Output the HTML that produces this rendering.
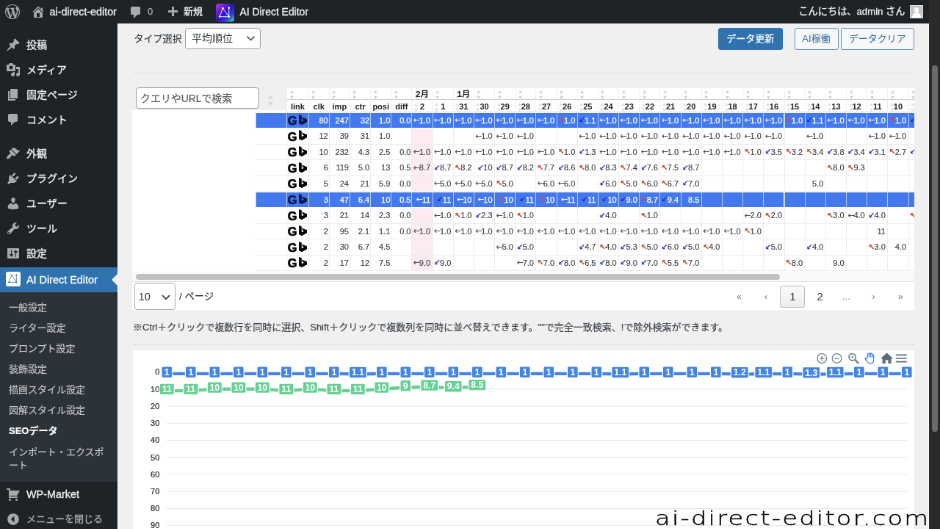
<!DOCTYPE html>
<html lang="ja"><head><meta charset="utf-8"><title>SEOデータ ‹ ai-direct-editor — WordPress</title>
<style>
*{box-sizing:border-box;margin:0;padding:0}
html,body{width:940px;height:529px;overflow:hidden;background:#f0f0f1}
body{font-family:"Liberation Sans","Noto Sans CJK JP",sans-serif;font-size:13px;color:#3c434a}
#root{will-change:transform;position:absolute;left:0;top:0;width:1280px;height:721px;transform:scale(0.734375);transform-origin:0 0;overflow:hidden;background:#f0f0f1}
.abs{position:absolute}
#adminbar{-webkit-text-stroke:0.300px currentColor;position:absolute;left:0;top:0;width:1265px;height:32px;background:#1d2327;color:#f0f0f1;font-size:13px;line-height:32px;white-space:nowrap}
#adminbar .t{position:absolute;top:0;height:32px;line-height:32px}
#adminbar svg{position:absolute;fill:#a7aaad}
#menu{position:absolute;left:0;top:32px;width:160px;height:689px;background:#1d2327}
.mi{-webkit-text-stroke:0.300px currentColor;position:absolute;left:0;width:160px;height:34px;color:#f0f0f1;font-size:14px;line-height:34px;white-space:nowrap}
.mi span{position:absolute;left:36px;top:0}
.mi svg{position:absolute;left:8px;top:7px;width:20px;height:20px;fill:#a7aaad}
#sub{position:absolute;left:0;top:366px;width:160px;height:258px;background:#2c3338}
.si{-webkit-text-stroke:0.200px currentColor;position:absolute;left:12px;width:136px;font-size:13px;line-height:18.2px;color:#c3c4c7}
#sbar{position:absolute;left:1265px;top:0;width:15px;height:721px;background:#2b2b2b}
#sbar i{position:absolute;left:4px;width:8px;top:89px;height:499px;border-radius:4px;background:#6b6b6b}
.btn{position:absolute;top:38px;height:30px;border:1px solid #5f8fc0;border-radius:3px;font-size:13px;line-height:28px;text-align:center;color:#2f6aa5;background:#f6f7f7;white-space:nowrap}
.btn.p{background:#3072b0;border-color:#3072b0;color:#fff;-webkit-text-stroke:0.250px #fff}
.sel{position:absolute;border:1px solid #9a9da1;border-radius:4px;background:#fff;color:#2c3338;font-size:14px;white-space:nowrap}
.hr{position:absolute;left:181px;width:1064px;height:1px;background:#dcdcde}

.th1,.th2{position:absolute;font-size:11px;font-weight:bold;color:#222;text-align:center;white-space:nowrap;border-left:1px solid #efefef}
.th1{line-height:16.500px;border-bottom:1.300px solid #cdcdcd;font-size:11.500px}
.th1 b{font-weight:bold}
.th2{line-height:18px;border-bottom:1px solid #d8d8d8}
.tr{position:absolute;left:0;width:1245px;font-size:11px;color:#3d3d3d;-webkit-text-stroke:0.150px #3d3d3d}
.td{position:absolute;top:0;height:100%;line-height:21.600px;text-align:right;padding-right:2.500px;white-space:nowrap;border-left:1px solid #ededed;border-bottom:1px solid #ececec;overflow:hidden}
.td.first{border-left:none}
.td.pk{background:#fcecf1}
.tr.on{color:#fff;-webkit-text-stroke:0.250px #fff}
.tr.on .td i{-webkit-text-stroke:0}
.tr.on .td{background:#4479ee;border-left:1.500px solid #b4ccf9;border-bottom:1.300px solid #fff}
.td i{font-style:normal;font-family:"DejaVu Sans",sans-serif;font-size:11px;display:inline-block;vertical-align:top;position:relative;top:-0.500px;margin-right:-1px}
.td i.aU,.td i.aD{font-weight:bold;font-size:10.500px;margin-right:-0.800px}
.td.m{padding-right:1px}
.aL{color:#555}.aU{color:#f0452a}.aD{color:#2238e0}
.tr.on .aL{color:#fff}.tr.on .aD{color:#1228c8}.tr.on .aU{color:#e8452f}
.td.lk{text-align:left;padding:0;color:#000}
.td.lk .g{position:absolute;left:0.500px;top:0.500px;font-size:16.300px;-webkit-text-stroke:0.700px currentColor;font-weight:bold;line-height:21.500px;color:#000}
.td.lk svg{position:absolute;left:15.900px;top:2.300px;fill:#000}
.tr.on .td.lk .g{color:#0b1748}.tr.on .td.lk svg{fill:#0b1748}
.pg{position:absolute;text-align:center;font-size:15px;line-height:20px}
</style></head>
<body>
<div id="root">
<div id="adminbar">
<svg class="abs" viewBox="0 0 20 20" width="20" height="20" style="left:7px;top:6px;"><path d="M20 10c0-5.510-4.490-10-10-10C4.480 0 0 4.490 0 10c0 5.520 4.480 10 10 10 5.510 0 10-4.480 10-10zM7.780 15.370L4.370 6.220c.55-.02 1.170-.08 1.170-.08.5-.06.44-1.130-.06-1.110 0 0-1.450.110-2.370.110-.18 0-.37 0-.58-.01C4.120 2.690 6.870 1.110 10 1.110c2.330 0 4.450.87 6.050 2.340-.68-.11-1.650.39-1.650 1.580 0 .74.45 1.360.9 2.100.35.61.55 1.360.55 2.460 0 1.490-1.400 5-1.400 5l-3.030-8.370c.54-.02.82-.17.82-.17.5-.05.44-1.250-.06-1.220 0 0-1.440.12-2.380.12-.87 0-2.330-.12-2.330-.12-.5-.03-.56 1.200-.06 1.220l.92.08 1.260 3.410zM17.410 10c.24-.64.74-1.870.43-4.250.7 1.290 1.050 2.710 1.050 4.250 0 3.290-1.730 6.240-4.400 7.780.97-2.590 1.940-5.200 2.920-7.780zM6.100 18.090C3.120 16.650 1.110 13.530 1.110 10c0-1.300.23-2.480.72-3.590C3.250 10.300 4.670 14.200 6.100 18.090zm4.030-6.630l2.580 6.980c-.86.29-1.760.45-2.710.45-.79 0-1.570-.11-2.290-.33.81-2.380 1.620-4.740 2.420-7.100z"/></svg>
<svg class="abs" viewBox="0 0 20 20" width="20" height="20" style="left:42px;top:6px;"><path d="M16 8.500l1.530 1.530-1.060 1.060L10 4.620l-6.470 6.470-1.060-1.060L10 2.500l4 4v-2h2v4zm-6-2.460l6 5.990V18H4v-5.970zM12 17v-5H8v5h4z"/></svg>
<span class="t" id="ab-site" style="left:67.5px;font-size:14.300px">ai-direct-editor</span>
<svg class="abs" viewBox="0 0 20 20" width="20" height="20" style="left:175px;top:7px;"><path d="M5 2h9c1.1 0 2 .9 2 2v7c0 1.1-.9 2-2 2h-2l-5 5v-5H5c-1.1 0-2-.9-2-2V4c0-1.1.9-2 2-2z"/></svg>
<span class="t" id="ab-c" style="left:201px;color:#a7aaad">0</span>
<svg class="abs" viewBox="0 0 20 20" width="20" height="20" style="left:225px;top:7px;"><path d="M17 7v3h-5v5H9v-5H4V7h5V2h3v5h5z"/></svg>
<span class="t" id="ab-new" style="left:250px">新規</span>
<svg class="abs" id="ab-logo" viewBox="0 0 25 25" width="24.800" height="24.800" style="left:294px;top:5px"><defs><linearGradient id="lg1" x1="0" y1="0" x2="1" y2="1"><stop offset="0" stop-color="#c236e6"/><stop offset="0.28" stop-color="#6a1fd8"/><stop offset="0.5" stop-color="#2a14c4"/><stop offset="0.75" stop-color="#2f44de"/><stop offset="0.93" stop-color="#3fc9a8"/><stop offset="1" stop-color="#58e0a0"/></linearGradient></defs><rect x="0" y="0" width="25" height="25" rx="4" fill="url(#lg1)"/><g stroke="#fff" stroke-width="0.950" fill="none" stroke-linejoin="round"><path d="M9.500 6.400L5.100 17.900H17.900Z"/><path d="M17.900 5.700V17.900"/></g><g fill="#fff"><circle cx="9.500" cy="6.400" r="1.300"/><circle cx="5.100" cy="17.900" r="1.300"/><circle cx="17.900" cy="17.900" r="1.300"/><circle cx="17.900" cy="5.700" r="1.300"/></g></svg>
<span class="t" id="ab-plug" style="left:326.500px;font-size:13.900px">AI Direct Editor</span>
<span class="t" id="ab-hello" style="right:32.500px;font-size:13.200px">こんにちは、admin さん</span>
<div class="abs" id="ab-av" style="left:1239.300px;top:7px;width:17.500px;height:17.500px;background:#c3c3c3;border:1px solid #dedede;overflow:hidden"><div class="abs" style="left:4.500px;top:2px;width:6.500px;height:7px;border-radius:50%;background:#fff"></div><div class="abs" style="left:1.500px;top:9px;width:12.500px;height:12px;border-radius:6px 6px 0 0;background:#fff"></div></div>
</div>
<div id="menu">
<div class="mi" style="top:12px"><svg viewBox="0 0 20 20"><path d="M10.44 3.02l1.82-1.82 6.36 6.35-1.83 1.82c-1.05-.68-2.48-.57-3.41.36l-.75.75c-.92.93-1.04 2.35-.35 3.41l-1.83 1.82-2.41-2.41-2.8 2.79c-.42.42-3.38 2.71-3.8 2.29s1.86-3.39 2.28-3.81l2.79-2.79L4.1 9.36l1.83-1.82c1.05.69 2.48.57 3.4-.36l.75-.75c.93-.92 1.05-2.35.36-3.41z"/></svg><span>投稿</span></div>
<div class="mi" style="top:46px"><svg viewBox="0 0 20 20"><path d="M13 11V4c0-.55-.45-1-1-1h-1.67L9 1H5L3.67 3H2c-.55 0-1 .45-1 1v7c0 .55.45 1 1 1h10c.55 0 1-.45 1-1zM7 4.5c1.38 0 2.5 1.12 2.5 2.5S8.38 9.5 7 9.5 4.5 8.38 4.5 7 5.62 4.5 7 4.5zM14 6h5v10.5c0 1.38-1.12 2.5-2.5 2.5S14 17.88 14 16.5s1.120-2.5 2.5-2.5c.17 0 .34.02.5.05V9h-3V6zm-4 8.05V13h2v3.5c0 1.38-1.12 2.5-2.5 2.5S7 17.88 7 16.5 8.12 14 9.5 14c.17 0 .34.02.5.05z"/></svg><span>メディア</span></div>
<div class="mi" style="top:80px"><svg viewBox="0 0 20 20"><path d="M6 15V2h10v13H6zm-1 1h8v2H3V5h2v11z"/></svg><span>固定ページ</span></div>
<div class="mi" style="top:114px"><svg viewBox="0 0 20 20"><path d="M5 2h9c1.1 0 2 .9 2 2v7c0 1.1-.9 2-2 2h-2l-5 5v-5H5c-1.1 0-2-.9-2-2V4c0-1.1.9-2 2-2z"/></svg><span>コメント</span></div>
<div class="mi" style="top:160px"><svg viewBox="0 0 20 20"><path d="M14.48 11.06L7.41 3.99l1.5-1.5c.5-.56 2.3-.47 3.51.32 1.21.8 1.43 1.28 2.91 2.1 1.18.64 2.45 1.26 4.45.85zm-.71.71L6.7 4.7 4.93 6.47c-.39.39-.39 1.02 0 1.41l1.06 1.06c.39.39.39 1.03 0 1.42-.6.6-1.43 1.11-2.21 1.69-.35.26-.7.53-1.01.84C1.43 14.23.4 16.08 1.4 17.07c.99 1 2.84-.03 4.18-1.36.31-.31.58-.66.85-1.02.57-.78 1.08-1.61 1.69-2.21.39-.39 1.02-.39 1.41 0l1.06 1.06c.39.39 1.02.39 1.41 0z"/></svg><span>外観</span></div>
<div class="mi" style="top:194px"><svg viewBox="0 0 20 20"><path d="M13.11 4.36L9.87 7.6 8 5.73l3.24-3.24c.35-.34 1.05-.2 1.56.32.52.51.66 1.21.31 1.55zm-8 1.77l.91-1.12 9.01 9.01-1.19.84c-.71.71-2.63 1.16-3.82 1.16H6.14L4.9 17.26c-.59.59-1.54.59-2.12 0-.59-.58-.59-1.53 0-2.12l1.24-1.24v-3.88c0-1.13.4-3.19 1.09-3.89zm7.26 3.97l3.24-3.24c.34-.35 1.04-.21 1.55.31.52.51.66 1.21.31 1.55l-3.24 3.25z"/></svg><span>プラグイン</span></div>
<div class="mi" style="top:228px"><svg viewBox="0 0 20 20"><path d="M10 9.25c-2.27 0-2.73-3.44-2.73-3.44C7 4.02 7.82 2 9.97 2c2.16 0 2.98 2.02 2.71 3.81 0 0-.41 3.44-2.68 3.44zm0 2.57L12.72 10c2.39 0 4.52 2.33 4.52 4.53v2.49s-3.65 1.13-7.24 1.13c-3.65 0-7.24-1.13-7.24-1.13v-2.49c0-2.25 1.94-4.48 4.47-4.48z"/></svg><span>ユーザー</span></div>
<div class="mi" style="top:262px"><svg viewBox="0 0 20 20"><path d="M16.68 9.77c-1.34 1.34-3.3 1.67-4.95.99l-5.41 6.52c-.99.99-2.59.99-3.58 0s-.99-2.59 0-3.57l6.52-5.42c-.68-1.65-.35-3.61.99-4.95 1.28-1.28 3.12-1.62 4.72-1.06l-2.89 2.89 2.82 2.82 2.86-2.89c.53 1.6.18 3.42-1.08 4.67zm-13.3 6.9c.46.46 1.2.46 1.66 0s.46-1.2 0-1.66c-.46-.46-1.2-.46-1.66 0s-.46 1.2 0 1.660z"/></svg><span>ツール</span></div>
<div class="mi" style="top:296px"><svg viewBox="0 0 20 20"><path d="M18 16V4c0-.55-.45-1-1-1H3c-.55 0-1 .45-1 1v12c0 .55.45 1 1 1h14c.55 0 1-.45 1-1zM8 11h1c.55 0 1 .45 1 1s-.45 1-1 1H8v1.5c0 .28-.22.5-.5.5s-.5-.22-.5-.5V13H6c-.55 0-1-.45-1-1s.45-1 1-1h1V5.500c0-.28.22-.5.5-.5s.5.22.5.5V11zm5-2h-1c-.55 0-1-.45-1-1s.45-1 1-1h1V5.500c0-.28.22-.5.5-.5s.5.22.5.5V7h1c.55 0 1 .45 1 1s-.45 1-1 1h-1v5.500c0 .28-.22.5-.5.5s-.5-.22-.5-.5V9z"/></svg><span>設定</span></div>
<div class="mi" id="mi-act" style="top:332px;background:#3072b0;color:#fff;font-size:14.400px"><div class="abs" style="left:8px;top:6px;width:20px;height:20px;border-radius:3px;background:#fff"></div><svg viewBox="0 0 25 25" style="top:6px;fill:none;stroke:#5580ae;stroke-width:1.100"><path d="M9.500 6.400L5.100 17.900H17.900Z"/><path d="M17.900 5.700V17.900"/><g style="fill:#2a5f98;stroke:none"><circle cx="9.500" cy="6.400" r="1.300"/><circle cx="5.100" cy="17.900" r="1.300"/><circle cx="17.900" cy="17.900" r="1.300"/><circle cx="17.900" cy="5.700" r="1.300"/></g></svg><span>AI Direct Editor</span><div class="abs" style="right:0;top:9px;width:0;height:0;border:8px solid transparent;border-right-color:#f0f0f1"></div></div>
<div id="sub">
<div class="si" style="top:11.9px;">一般設定</div>
<div class="si" style="top:39.7px;">ライター設定</div>
<div class="si" style="top:68.1px;">プロンプト設定</div>
<div class="si" style="top:96.3px;">装飾設定</div>
<div class="si" style="top:124.3px;">描画スタイル設定</div>
<div class="si" style="top:151.9px;">図解スタイル設定</div>
<div class="si" style="top:180.1px;color:#fff;font-weight:bold;">SEOデータ</div>
<div class="si" style="top:208.9px">インポート・エクスポート</div>
</div>
<div class="mi" style="top:623.5px;font-size:14.400px"><svg viewBox="0 0 20 20"><path d="M6 13h9c.55 0 1 .45 1 1s-.45 1-1 1H5c-.55 0-1-.45-1-1V4H2c-.55 0-1-.45-1-1s.45-1 1-1h3c.55 0 1 .45 1 1v2h13l-4 7H6v1zm-.5 3c.83 0 1.5.67 1.5 1.500S6.330 19 5.500 19 4 18.330 4 17.500 4.670 16 5.500 16zm9 0c.83 0 1.500.67 1.500 1.500s-.67 1.500-1.500 1.500-1.500-.67-1.500-1.500.67-1.500 1.500-1.500z"/></svg><span>WP-Market</span></div>
<div class="mi" style="top:658.4px;color:#a7aaad;font-size:13px"><svg viewBox="0 0 20 20"><path d="M10 2.160c4.330 0 7.840 3.510 7.840 7.840s-3.510 7.840-7.840 7.840S2.160 14.330 2.160 10 5.670 2.160 10 2.160zM11.470 14.500V5.500L6.970 10z"/></svg><span>メニューを閉じる</span></div>
</div>
<div id="sbar"><i></i></div>
<div class="abs" style="left:160px;top:32px;width:1.300px;height:689px;background:rgba(255,255,255,.85)"></div><div class="abs" style="left:160px;top:32px;width:1105px;height:1.300px;background:rgba(255,255,255,.85)"></div><div class="abs" style="left:1263.700px;top:32px;width:1.300px;height:689px;background:rgba(255,255,255,.85)"></div>
<div class="abs" id="lbl-type" style="-webkit-text-stroke:0.200px #3c434a;left:182.500px;top:43px;line-height:20px;font-size:13px;color:#3c434a">タイプ選択</div>
<div class="sel" id="sel-type" style="left:252px;top:38.100px;width:103px;height:29.300px;line-height:27.500px;padding-left:8px">平均順位<svg class="abs" viewBox="0 0 20 20" width="19" height="19" style="right:3.500px;top:4.200px"><path d="M4.700 7l5.300 5.300L15.300 7" fill="none" stroke="#50575e" stroke-width="1.700"/></svg></div>
<div class="btn p" id="b1" style="left:977.500px;width:88.500px">データ更新</div>
<div class="btn" id="b2" style="left:1081.500px;width:60px">AI稼働</div>
<div class="btn" id="b3" style="left:1145px;width:99.500px">データクリア</div>
<div class="hr" style="top:99px"></div>
<div class="abs" id="tbl" style="left:0;top:0;width:1245.0px;height:430px;overflow:hidden">
<div class="abs" style="left:390.2px;top:119.5px;width:854.8px;height:34.0px;background:#fff"></div>
<div class="abs" style="left:180.4px;top:149.5px;width:1064.6px;height:272.5px;background:#fff"></div>
<div class="abs thead" style="left:0;top:0">
<svg class="abs" viewBox="0 0 8 16" width="7.0" height="14.0" style="left:393.70px;top:121.50px"><path d="M4 1L7 6H1z" fill="#d4d4d4"/><path d="M4 15L7 10H1z" fill="#d4d4d4"/></svg>
<div class="th1" style="left:390.20px;top:119.5px;width:29.40px;height:16.70px"></div>
<div class="th2" style="left:390.20px;top:136.2px;width:29.40px;height:17.30px">link</div>
<svg class="abs" viewBox="0 0 8 16" width="7.0" height="14.0" style="left:423.10px;top:121.50px"><path d="M4 1L7 6H1z" fill="#d4d4d4"/><path d="M4 15L7 10H1z" fill="#d4d4d4"/></svg>
<div class="th1" style="left:419.60px;top:119.5px;width:28.17px;height:16.70px"></div>
<div class="th2" style="left:419.60px;top:136.2px;width:28.17px;height:17.30px">clk</div>
<svg class="abs" viewBox="0 0 8 16" width="7.0" height="14.0" style="left:451.27px;top:121.50px"><path d="M4 1L7 6H1z" fill="#d4d4d4"/><path d="M4 15L7 10H1z" fill="#d4d4d4"/></svg>
<div class="th1" style="left:447.77px;top:119.5px;width:28.17px;height:16.70px"></div>
<div class="th2" style="left:447.77px;top:136.2px;width:28.17px;height:17.30px">imp</div>
<svg class="abs" viewBox="0 0 8 16" width="7.0" height="14.0" style="left:479.44px;top:121.50px"><path d="M4 1L7 6H1z" fill="#d4d4d4"/><path d="M4 15L7 10H1z" fill="#d4d4d4"/></svg>
<div class="th1" style="left:475.94px;top:119.5px;width:28.17px;height:16.70px"></div>
<div class="th2" style="left:475.94px;top:136.2px;width:28.17px;height:17.30px">ctr</div>
<svg class="abs" viewBox="0 0 8 16" width="7.0" height="14.0" style="left:507.61px;top:121.50px"><path d="M4 1L7 6H1z" fill="#d4d4d4"/><path d="M4 15L7 10H1z" fill="#d4d4d4"/></svg>
<div class="th1" style="left:504.11px;top:119.5px;width:28.17px;height:16.70px"></div>
<div class="th2" style="left:504.11px;top:136.2px;width:28.17px;height:17.30px">posi</div>
<svg class="abs" viewBox="0 0 8 16" width="7.0" height="14.0" style="left:535.78px;top:121.50px"><path d="M4 1L7 6H1z" fill="#d4d4d4"/><path d="M4 15L7 10H1z" fill="#d4d4d4"/></svg>
<div class="th1" style="left:532.28px;top:119.5px;width:28.17px;height:16.70px"></div>
<div class="th2" style="left:532.28px;top:136.2px;width:28.17px;height:17.30px">diff</div>
<svg class="abs" viewBox="0 0 8 16" width="7.0" height="14.0" style="left:563.95px;top:121.50px"><path d="M4 1L7 6H1z" fill="#d4d4d4"/><path d="M4 15L7 10H1z" fill="#d4d4d4"/></svg>
<div class="th1" style="left:560.45px;top:119.5px;width:28.17px;height:16.70px"><b>2月</b></div>
<div class="th2" style="left:560.45px;top:136.2px;width:28.17px;height:17.30px">2</div>
<svg class="abs" viewBox="0 0 8 16" width="7.0" height="14.0" style="left:562.95px;top:138.70px"><path d="M4 1L7 6H1z" fill="#e2e2e2"/><path d="M4 15L7 10H1z" fill="#e2e2e2"/></svg>
<svg class="abs" viewBox="0 0 8 16" width="7.0" height="14.0" style="left:592.12px;top:121.50px"><path d="M4 1L7 6H1z" fill="#d4d4d4"/><path d="M4 15L7 10H1z" fill="#d4d4d4"/></svg>
<div class="th1" style="left:588.62px;top:119.5px;width:28.17px;height:16.70px"></div>
<div class="th2" style="left:588.62px;top:136.2px;width:28.17px;height:17.30px">1</div>
<svg class="abs" viewBox="0 0 8 16" width="7.0" height="14.0" style="left:591.12px;top:138.70px"><path d="M4 1L7 6H1z" fill="#e2e2e2"/><path d="M4 15L7 10H1z" fill="#e2e2e2"/></svg>
<svg class="abs" viewBox="0 0 8 16" width="7.0" height="14.0" style="left:620.29px;top:121.50px"><path d="M4 1L7 6H1z" fill="#d4d4d4"/><path d="M4 15L7 10H1z" fill="#d4d4d4"/></svg>
<div class="th1" style="left:616.79px;top:119.5px;width:28.17px;height:16.70px"><b>1月</b></div>
<div class="th2" style="left:616.79px;top:136.2px;width:28.17px;height:17.30px">31</div>
<svg class="abs" viewBox="0 0 8 16" width="7.0" height="14.0" style="left:619.29px;top:138.70px"><path d="M4 1L7 6H1z" fill="#e2e2e2"/><path d="M4 15L7 10H1z" fill="#e2e2e2"/></svg>
<svg class="abs" viewBox="0 0 8 16" width="7.0" height="14.0" style="left:648.46px;top:121.50px"><path d="M4 1L7 6H1z" fill="#d4d4d4"/><path d="M4 15L7 10H1z" fill="#d4d4d4"/></svg>
<div class="th1" style="left:644.96px;top:119.5px;width:28.17px;height:16.70px"></div>
<div class="th2" style="left:644.96px;top:136.2px;width:28.17px;height:17.30px">30</div>
<svg class="abs" viewBox="0 0 8 16" width="7.0" height="14.0" style="left:647.46px;top:138.70px"><path d="M4 1L7 6H1z" fill="#e2e2e2"/><path d="M4 15L7 10H1z" fill="#e2e2e2"/></svg>
<svg class="abs" viewBox="0 0 8 16" width="7.0" height="14.0" style="left:676.63px;top:121.50px"><path d="M4 1L7 6H1z" fill="#d4d4d4"/><path d="M4 15L7 10H1z" fill="#d4d4d4"/></svg>
<div class="th1" style="left:673.13px;top:119.5px;width:28.17px;height:16.70px"></div>
<div class="th2" style="left:673.13px;top:136.2px;width:28.17px;height:17.30px">29</div>
<svg class="abs" viewBox="0 0 8 16" width="7.0" height="14.0" style="left:675.63px;top:138.70px"><path d="M4 1L7 6H1z" fill="#e2e2e2"/><path d="M4 15L7 10H1z" fill="#e2e2e2"/></svg>
<svg class="abs" viewBox="0 0 8 16" width="7.0" height="14.0" style="left:704.80px;top:121.50px"><path d="M4 1L7 6H1z" fill="#d4d4d4"/><path d="M4 15L7 10H1z" fill="#d4d4d4"/></svg>
<div class="th1" style="left:701.30px;top:119.5px;width:28.17px;height:16.70px"></div>
<div class="th2" style="left:701.30px;top:136.2px;width:28.17px;height:17.30px">28</div>
<svg class="abs" viewBox="0 0 8 16" width="7.0" height="14.0" style="left:703.80px;top:138.70px"><path d="M4 1L7 6H1z" fill="#e2e2e2"/><path d="M4 15L7 10H1z" fill="#e2e2e2"/></svg>
<svg class="abs" viewBox="0 0 8 16" width="7.0" height="14.0" style="left:732.97px;top:121.50px"><path d="M4 1L7 6H1z" fill="#d4d4d4"/><path d="M4 15L7 10H1z" fill="#d4d4d4"/></svg>
<div class="th1" style="left:729.47px;top:119.5px;width:28.17px;height:16.70px"></div>
<div class="th2" style="left:729.47px;top:136.2px;width:28.17px;height:17.30px">27</div>
<svg class="abs" viewBox="0 0 8 16" width="7.0" height="14.0" style="left:731.97px;top:138.70px"><path d="M4 1L7 6H1z" fill="#e2e2e2"/><path d="M4 15L7 10H1z" fill="#e2e2e2"/></svg>
<svg class="abs" viewBox="0 0 8 16" width="7.0" height="14.0" style="left:761.14px;top:121.50px"><path d="M4 1L7 6H1z" fill="#d4d4d4"/><path d="M4 15L7 10H1z" fill="#d4d4d4"/></svg>
<div class="th1" style="left:757.64px;top:119.5px;width:28.17px;height:16.70px"></div>
<div class="th2" style="left:757.64px;top:136.2px;width:28.17px;height:17.30px">26</div>
<svg class="abs" viewBox="0 0 8 16" width="7.0" height="14.0" style="left:760.14px;top:138.70px"><path d="M4 1L7 6H1z" fill="#e2e2e2"/><path d="M4 15L7 10H1z" fill="#e2e2e2"/></svg>
<svg class="abs" viewBox="0 0 8 16" width="7.0" height="14.0" style="left:789.31px;top:121.50px"><path d="M4 1L7 6H1z" fill="#d4d4d4"/><path d="M4 15L7 10H1z" fill="#d4d4d4"/></svg>
<div class="th1" style="left:785.81px;top:119.5px;width:28.17px;height:16.70px"></div>
<div class="th2" style="left:785.81px;top:136.2px;width:28.17px;height:17.30px">25</div>
<svg class="abs" viewBox="0 0 8 16" width="7.0" height="14.0" style="left:788.31px;top:138.70px"><path d="M4 1L7 6H1z" fill="#e2e2e2"/><path d="M4 15L7 10H1z" fill="#e2e2e2"/></svg>
<svg class="abs" viewBox="0 0 8 16" width="7.0" height="14.0" style="left:817.48px;top:121.50px"><path d="M4 1L7 6H1z" fill="#d4d4d4"/><path d="M4 15L7 10H1z" fill="#d4d4d4"/></svg>
<div class="th1" style="left:813.98px;top:119.5px;width:28.17px;height:16.70px"></div>
<div class="th2" style="left:813.98px;top:136.2px;width:28.17px;height:17.30px">24</div>
<svg class="abs" viewBox="0 0 8 16" width="7.0" height="14.0" style="left:816.48px;top:138.70px"><path d="M4 1L7 6H1z" fill="#e2e2e2"/><path d="M4 15L7 10H1z" fill="#e2e2e2"/></svg>
<svg class="abs" viewBox="0 0 8 16" width="7.0" height="14.0" style="left:845.65px;top:121.50px"><path d="M4 1L7 6H1z" fill="#d4d4d4"/><path d="M4 15L7 10H1z" fill="#d4d4d4"/></svg>
<div class="th1" style="left:842.15px;top:119.5px;width:28.17px;height:16.70px"></div>
<div class="th2" style="left:842.15px;top:136.2px;width:28.17px;height:17.30px">23</div>
<svg class="abs" viewBox="0 0 8 16" width="7.0" height="14.0" style="left:844.65px;top:138.70px"><path d="M4 1L7 6H1z" fill="#e2e2e2"/><path d="M4 15L7 10H1z" fill="#e2e2e2"/></svg>
<svg class="abs" viewBox="0 0 8 16" width="7.0" height="14.0" style="left:873.82px;top:121.50px"><path d="M4 1L7 6H1z" fill="#d4d4d4"/><path d="M4 15L7 10H1z" fill="#d4d4d4"/></svg>
<div class="th1" style="left:870.32px;top:119.5px;width:28.17px;height:16.70px"></div>
<div class="th2" style="left:870.32px;top:136.2px;width:28.17px;height:17.30px">22</div>
<svg class="abs" viewBox="0 0 8 16" width="7.0" height="14.0" style="left:872.82px;top:138.70px"><path d="M4 1L7 6H1z" fill="#e2e2e2"/><path d="M4 15L7 10H1z" fill="#e2e2e2"/></svg>
<svg class="abs" viewBox="0 0 8 16" width="7.0" height="14.0" style="left:901.99px;top:121.50px"><path d="M4 1L7 6H1z" fill="#d4d4d4"/><path d="M4 15L7 10H1z" fill="#d4d4d4"/></svg>
<div class="th1" style="left:898.49px;top:119.5px;width:28.17px;height:16.70px"></div>
<div class="th2" style="left:898.49px;top:136.2px;width:28.17px;height:17.30px">21</div>
<svg class="abs" viewBox="0 0 8 16" width="7.0" height="14.0" style="left:900.99px;top:138.70px"><path d="M4 1L7 6H1z" fill="#e2e2e2"/><path d="M4 15L7 10H1z" fill="#e2e2e2"/></svg>
<svg class="abs" viewBox="0 0 8 16" width="7.0" height="14.0" style="left:930.16px;top:121.50px"><path d="M4 1L7 6H1z" fill="#d4d4d4"/><path d="M4 15L7 10H1z" fill="#d4d4d4"/></svg>
<div class="th1" style="left:926.66px;top:119.5px;width:28.17px;height:16.70px"></div>
<div class="th2" style="left:926.66px;top:136.2px;width:28.17px;height:17.30px">20</div>
<svg class="abs" viewBox="0 0 8 16" width="7.0" height="14.0" style="left:929.16px;top:138.70px"><path d="M4 1L7 6H1z" fill="#e2e2e2"/><path d="M4 15L7 10H1z" fill="#e2e2e2"/></svg>
<svg class="abs" viewBox="0 0 8 16" width="7.0" height="14.0" style="left:958.33px;top:121.50px"><path d="M4 1L7 6H1z" fill="#d4d4d4"/><path d="M4 15L7 10H1z" fill="#d4d4d4"/></svg>
<div class="th1" style="left:954.83px;top:119.5px;width:28.17px;height:16.70px"></div>
<div class="th2" style="left:954.83px;top:136.2px;width:28.17px;height:17.30px">19</div>
<svg class="abs" viewBox="0 0 8 16" width="7.0" height="14.0" style="left:957.33px;top:138.70px"><path d="M4 1L7 6H1z" fill="#e2e2e2"/><path d="M4 15L7 10H1z" fill="#e2e2e2"/></svg>
<svg class="abs" viewBox="0 0 8 16" width="7.0" height="14.0" style="left:986.50px;top:121.50px"><path d="M4 1L7 6H1z" fill="#d4d4d4"/><path d="M4 15L7 10H1z" fill="#d4d4d4"/></svg>
<div class="th1" style="left:983.00px;top:119.5px;width:28.17px;height:16.70px"></div>
<div class="th2" style="left:983.00px;top:136.2px;width:28.17px;height:17.30px">18</div>
<svg class="abs" viewBox="0 0 8 16" width="7.0" height="14.0" style="left:985.50px;top:138.70px"><path d="M4 1L7 6H1z" fill="#e2e2e2"/><path d="M4 15L7 10H1z" fill="#e2e2e2"/></svg>
<svg class="abs" viewBox="0 0 8 16" width="7.0" height="14.0" style="left:1014.67px;top:121.50px"><path d="M4 1L7 6H1z" fill="#d4d4d4"/><path d="M4 15L7 10H1z" fill="#d4d4d4"/></svg>
<div class="th1" style="left:1011.17px;top:119.5px;width:28.17px;height:16.70px"></div>
<div class="th2" style="left:1011.17px;top:136.2px;width:28.17px;height:17.30px">17</div>
<svg class="abs" viewBox="0 0 8 16" width="7.0" height="14.0" style="left:1013.67px;top:138.70px"><path d="M4 1L7 6H1z" fill="#e2e2e2"/><path d="M4 15L7 10H1z" fill="#e2e2e2"/></svg>
<svg class="abs" viewBox="0 0 8 16" width="7.0" height="14.0" style="left:1042.84px;top:121.50px"><path d="M4 1L7 6H1z" fill="#d4d4d4"/><path d="M4 15L7 10H1z" fill="#d4d4d4"/></svg>
<div class="th1" style="left:1039.34px;top:119.5px;width:28.17px;height:16.70px"></div>
<div class="th2" style="left:1039.34px;top:136.2px;width:28.17px;height:17.30px">16</div>
<svg class="abs" viewBox="0 0 8 16" width="7.0" height="14.0" style="left:1041.84px;top:138.70px"><path d="M4 1L7 6H1z" fill="#e2e2e2"/><path d="M4 15L7 10H1z" fill="#e2e2e2"/></svg>
<svg class="abs" viewBox="0 0 8 16" width="7.0" height="14.0" style="left:1071.01px;top:121.50px"><path d="M4 1L7 6H1z" fill="#d4d4d4"/><path d="M4 15L7 10H1z" fill="#d4d4d4"/></svg>
<div class="th1" style="left:1067.51px;top:119.5px;width:28.17px;height:16.70px"></div>
<div class="th2" style="left:1067.51px;top:136.2px;width:28.17px;height:17.30px">15</div>
<svg class="abs" viewBox="0 0 8 16" width="7.0" height="14.0" style="left:1070.01px;top:138.70px"><path d="M4 1L7 6H1z" fill="#e2e2e2"/><path d="M4 15L7 10H1z" fill="#e2e2e2"/></svg>
<svg class="abs" viewBox="0 0 8 16" width="7.0" height="14.0" style="left:1099.18px;top:121.50px"><path d="M4 1L7 6H1z" fill="#d4d4d4"/><path d="M4 15L7 10H1z" fill="#d4d4d4"/></svg>
<div class="th1" style="left:1095.68px;top:119.5px;width:28.17px;height:16.70px"></div>
<div class="th2" style="left:1095.68px;top:136.2px;width:28.17px;height:17.30px">14</div>
<svg class="abs" viewBox="0 0 8 16" width="7.0" height="14.0" style="left:1098.18px;top:138.70px"><path d="M4 1L7 6H1z" fill="#e2e2e2"/><path d="M4 15L7 10H1z" fill="#e2e2e2"/></svg>
<svg class="abs" viewBox="0 0 8 16" width="7.0" height="14.0" style="left:1127.35px;top:121.50px"><path d="M4 1L7 6H1z" fill="#d4d4d4"/><path d="M4 15L7 10H1z" fill="#d4d4d4"/></svg>
<div class="th1" style="left:1123.85px;top:119.5px;width:28.17px;height:16.70px"></div>
<div class="th2" style="left:1123.85px;top:136.2px;width:28.17px;height:17.30px">13</div>
<svg class="abs" viewBox="0 0 8 16" width="7.0" height="14.0" style="left:1126.35px;top:138.70px"><path d="M4 1L7 6H1z" fill="#e2e2e2"/><path d="M4 15L7 10H1z" fill="#e2e2e2"/></svg>
<svg class="abs" viewBox="0 0 8 16" width="7.0" height="14.0" style="left:1155.52px;top:121.50px"><path d="M4 1L7 6H1z" fill="#d4d4d4"/><path d="M4 15L7 10H1z" fill="#d4d4d4"/></svg>
<div class="th1" style="left:1152.02px;top:119.5px;width:28.17px;height:16.70px"></div>
<div class="th2" style="left:1152.02px;top:136.2px;width:28.17px;height:17.30px">12</div>
<svg class="abs" viewBox="0 0 8 16" width="7.0" height="14.0" style="left:1154.52px;top:138.70px"><path d="M4 1L7 6H1z" fill="#e2e2e2"/><path d="M4 15L7 10H1z" fill="#e2e2e2"/></svg>
<svg class="abs" viewBox="0 0 8 16" width="7.0" height="14.0" style="left:1183.69px;top:121.50px"><path d="M4 1L7 6H1z" fill="#d4d4d4"/><path d="M4 15L7 10H1z" fill="#d4d4d4"/></svg>
<div class="th1" style="left:1180.19px;top:119.5px;width:28.17px;height:16.70px"></div>
<div class="th2" style="left:1180.19px;top:136.2px;width:28.17px;height:17.30px">11</div>
<svg class="abs" viewBox="0 0 8 16" width="7.0" height="14.0" style="left:1182.69px;top:138.70px"><path d="M4 1L7 6H1z" fill="#e2e2e2"/><path d="M4 15L7 10H1z" fill="#e2e2e2"/></svg>
<svg class="abs" viewBox="0 0 8 16" width="7.0" height="14.0" style="left:1211.86px;top:121.50px"><path d="M4 1L7 6H1z" fill="#d4d4d4"/><path d="M4 15L7 10H1z" fill="#d4d4d4"/></svg>
<div class="th1" style="left:1208.36px;top:119.5px;width:28.17px;height:16.70px"></div>
<div class="th2" style="left:1208.36px;top:136.2px;width:28.17px;height:17.30px">10</div>
<svg class="abs" viewBox="0 0 8 16" width="7.0" height="14.0" style="left:1210.86px;top:138.70px"><path d="M4 1L7 6H1z" fill="#e2e2e2"/><path d="M4 15L7 10H1z" fill="#e2e2e2"/></svg>
<svg class="abs" viewBox="0 0 8 16" width="7.0" height="14.0" style="left:1240.03px;top:121.50px"><path d="M4 1L7 6H1z" fill="#d4d4d4"/><path d="M4 15L7 10H1z" fill="#d4d4d4"/></svg>
<div class="th1" style="left:1236.53px;top:119.5px;width:28.17px;height:16.70px"></div>
<div class="th2" style="left:1236.53px;top:136.2px;width:28.17px;height:17.30px">9</div>
<svg class="abs" viewBox="0 0 8 16" width="7.0" height="14.0" style="left:1239.03px;top:138.70px"><path d="M4 1L7 6H1z" fill="#e2e2e2"/><path d="M4 15L7 10H1z" fill="#e2e2e2"/></svg>
</div>
<svg class="abs" viewBox="0 0 8 16" width="8.8" height="17.5" style="left:364.00px;top:127.50px"><path d="M4 1L7 6H1z" fill="#d8d8d8"/><path d="M4 15L7 10H1z" fill="#d8d8d8"/></svg>
<div class="tr on" style="top:153.50px;height:21.60px">
<div class="td first" style="left:347.500px;width:42.70px"></div>
<div class="td lk" style="left:390.20px;width:29.40px"><span class="g">G</span><svg viewBox="5 1.5 16.500 20" width="11.300" height="14.200" preserveAspectRatio="none"><path d="M5 1.500L10.500 3.400V14.800L15.200 12.200L12.600 11L10.900 6.600L21.500 10.300V15.600L10.500 21.500L5 18.300Z"/></svg></div>
<div class="td m" style="left:419.60px;width:28.17px">80</div>
<div class="td m" style="left:447.77px;width:28.17px">247</div>
<div class="td m" style="left:475.94px;width:28.17px">32</div>
<div class="td m" style="left:504.11px;width:28.17px">1.0</div>
<div class="td m" style="left:532.28px;width:28.17px">0.0</div>
<div class="td" style="left:560.45px;width:28.17px"><i class="aL">←</i>1.0</div>
<div class="td" style="left:588.62px;width:28.17px"><i class="aL">←</i>1.0</div>
<div class="td" style="left:616.79px;width:28.17px"><i class="aL">←</i>1.0</div>
<div class="td" style="left:644.96px;width:28.17px"><i class="aL">←</i>1.0</div>
<div class="td" style="left:673.13px;width:28.17px"><i class="aL">←</i>1.0</div>
<div class="td" style="left:701.30px;width:28.17px"><i class="aL">←</i>1.0</div>
<div class="td" style="left:729.47px;width:28.17px"><i class="aL">←</i>1.0</div>
<div class="td" style="left:757.64px;width:28.17px"><i class="aU">↖</i>1.0</div>
<div class="td" style="left:785.81px;width:28.17px"><i class="aD">↙</i>1.1</div>
<div class="td" style="left:813.98px;width:28.17px"><i class="aL">←</i>1.0</div>
<div class="td" style="left:842.15px;width:28.17px"><i class="aL">←</i>1.0</div>
<div class="td" style="left:870.32px;width:28.17px"><i class="aL">←</i>1.0</div>
<div class="td" style="left:898.49px;width:28.17px"><i class="aL">←</i>1.0</div>
<div class="td" style="left:926.66px;width:28.17px"><i class="aL">←</i>1.0</div>
<div class="td" style="left:954.83px;width:28.17px"><i class="aL">←</i>1.0</div>
<div class="td" style="left:983.00px;width:28.17px"><i class="aL">←</i>1.0</div>
<div class="td" style="left:1011.17px;width:28.17px"><i class="aL">←</i>1.0</div>
<div class="td" style="left:1039.34px;width:28.17px"><i class="aL">←</i>1.0</div>
<div class="td" style="left:1067.51px;width:28.17px"><i class="aU">↖</i>1.0</div>
<div class="td" style="left:1095.68px;width:28.17px"><i class="aD">↙</i>1.1</div>
<div class="td" style="left:1123.85px;width:28.17px"><i class="aL">←</i>1.0</div>
<div class="td" style="left:1152.02px;width:28.17px"><i class="aL">←</i>1.0</div>
<div class="td" style="left:1180.19px;width:28.17px"><i class="aL">←</i>1.0</div>
<div class="td" style="left:1208.36px;width:28.17px"><i class="aU">↖</i>1.0</div>
<div class="td" style="left:1236.53px;width:28.17px"><i class="aD">↙</i>1.0</div>
</div>
<div class="tr" style="top:175.10px;height:21.60px">
<div class="td first" style="left:347.500px;width:42.70px"></div>
<div class="td lk" style="left:390.20px;width:29.40px"><span class="g">G</span><svg viewBox="5 1.5 16.500 20" width="11.300" height="14.200" preserveAspectRatio="none"><path d="M5 1.500L10.500 3.400V14.800L15.200 12.200L12.600 11L10.900 6.600L21.500 10.300V15.600L10.500 21.500L5 18.300Z"/></svg></div>
<div class="td m" style="left:419.60px;width:28.17px">12</div>
<div class="td m" style="left:447.77px;width:28.17px">39</div>
<div class="td m" style="left:475.94px;width:28.17px">31</div>
<div class="td m" style="left:504.11px;width:28.17px">1.0</div>
<div class="td m" style="left:532.28px;width:28.17px"></div>
<div class="td pk" style="left:560.45px;width:28.17px"></div>
<div class="td" style="left:588.62px;width:28.17px"></div>
<div class="td" style="left:616.79px;width:28.17px"></div>
<div class="td" style="left:644.96px;width:28.17px"><i class="aL">←</i>1.0</div>
<div class="td" style="left:673.13px;width:28.17px"><i class="aL">←</i>1.0</div>
<div class="td" style="left:701.30px;width:28.17px"><i class="aL">←</i>1.0</div>
<div class="td" style="left:729.47px;width:28.17px"></div>
<div class="td" style="left:757.64px;width:28.17px"></div>
<div class="td" style="left:785.81px;width:28.17px"><i class="aL">←</i>1.0</div>
<div class="td" style="left:813.98px;width:28.17px"><i class="aL">←</i>1.0</div>
<div class="td" style="left:842.15px;width:28.17px"><i class="aL">←</i>1.0</div>
<div class="td" style="left:870.32px;width:28.17px"><i class="aL">←</i>1.0</div>
<div class="td" style="left:898.49px;width:28.17px"><i class="aL">←</i>1.0</div>
<div class="td" style="left:926.66px;width:28.17px"><i class="aL">←</i>1.0</div>
<div class="td" style="left:954.83px;width:28.17px"><i class="aL">←</i>1.0</div>
<div class="td" style="left:983.00px;width:28.17px"><i class="aL">←</i>1.0</div>
<div class="td" style="left:1011.17px;width:28.17px"><i class="aL">←</i>1.0</div>
<div class="td" style="left:1039.34px;width:28.17px"><i class="aL">←</i>1.0</div>
<div class="td" style="left:1067.51px;width:28.17px"></div>
<div class="td" style="left:1095.68px;width:28.17px"><i class="aL">←</i>1.0</div>
<div class="td" style="left:1123.85px;width:28.17px"></div>
<div class="td" style="left:1152.02px;width:28.17px"></div>
<div class="td" style="left:1180.19px;width:28.17px"><i class="aL">←</i>1.0</div>
<div class="td" style="left:1208.36px;width:28.17px"><i class="aL">←</i>1.0</div>
<div class="td" style="left:1236.53px;width:28.17px"></div>
</div>
<div class="tr" style="top:196.70px;height:21.60px">
<div class="td first" style="left:347.500px;width:42.70px"></div>
<div class="td lk" style="left:390.20px;width:29.40px"><span class="g">G</span><svg viewBox="5 1.5 16.500 20" width="11.300" height="14.200" preserveAspectRatio="none"><path d="M5 1.500L10.500 3.400V14.800L15.200 12.200L12.600 11L10.900 6.600L21.500 10.300V15.600L10.500 21.500L5 18.300Z"/></svg></div>
<div class="td m" style="left:419.60px;width:28.17px">10</div>
<div class="td m" style="left:447.77px;width:28.17px">232</div>
<div class="td m" style="left:475.94px;width:28.17px">4.3</div>
<div class="td m" style="left:504.11px;width:28.17px">2.5</div>
<div class="td m" style="left:532.28px;width:28.17px">0.0</div>
<div class="td pk" style="left:560.45px;width:28.17px"><i class="aL">←</i>1.0</div>
<div class="td" style="left:588.62px;width:28.17px"><i class="aL">←</i>1.0</div>
<div class="td" style="left:616.79px;width:28.17px"><i class="aL">←</i>1.0</div>
<div class="td" style="left:644.96px;width:28.17px"><i class="aL">←</i>1.0</div>
<div class="td" style="left:673.13px;width:28.17px"><i class="aL">←</i>1.0</div>
<div class="td" style="left:701.30px;width:28.17px"><i class="aL">←</i>1.0</div>
<div class="td" style="left:729.47px;width:28.17px"><i class="aL">←</i>1.0</div>
<div class="td" style="left:757.64px;width:28.17px"><i class="aU">↖</i>1.0</div>
<div class="td" style="left:785.81px;width:28.17px"><i class="aD">↙</i>1.3</div>
<div class="td" style="left:813.98px;width:28.17px"><i class="aL">←</i>1.0</div>
<div class="td" style="left:842.15px;width:28.17px"><i class="aL">←</i>1.0</div>
<div class="td" style="left:870.32px;width:28.17px"><i class="aL">←</i>1.0</div>
<div class="td" style="left:898.49px;width:28.17px"><i class="aL">←</i>1.0</div>
<div class="td" style="left:926.66px;width:28.17px"><i class="aL">←</i>1.0</div>
<div class="td" style="left:954.83px;width:28.17px"><i class="aL">←</i>1.0</div>
<div class="td" style="left:983.00px;width:28.17px"><i class="aL">←</i>1.0</div>
<div class="td" style="left:1011.17px;width:28.17px"><i class="aU">↖</i>1.0</div>
<div class="td" style="left:1039.34px;width:28.17px"><i class="aD">↙</i>3.5</div>
<div class="td" style="left:1067.51px;width:28.17px"><i class="aU">↖</i>3.2</div>
<div class="td" style="left:1095.68px;width:28.17px"><i class="aU">↖</i>3.4</div>
<div class="td" style="left:1123.85px;width:28.17px"><i class="aD">↙</i>3.8</div>
<div class="td" style="left:1152.02px;width:28.17px"><i class="aD">↙</i>3.4</div>
<div class="td" style="left:1180.19px;width:28.17px"><i class="aD">↙</i>3.1</div>
<div class="td" style="left:1208.36px;width:28.17px"><i class="aU">↖</i>2.7</div>
<div class="td" style="left:1236.53px;width:28.17px"><i class="aD">↙</i>3.0</div>
</div>
<div class="tr" style="top:218.30px;height:21.60px">
<div class="td first" style="left:347.500px;width:42.70px"></div>
<div class="td lk" style="left:390.20px;width:29.40px"><span class="g">G</span><svg viewBox="5 1.5 16.500 20" width="11.300" height="14.200" preserveAspectRatio="none"><path d="M5 1.500L10.500 3.400V14.800L15.200 12.200L12.600 11L10.900 6.600L21.500 10.300V15.600L10.500 21.500L5 18.300Z"/></svg></div>
<div class="td m" style="left:419.60px;width:28.17px">6</div>
<div class="td m" style="left:447.77px;width:28.17px">119</div>
<div class="td m" style="left:475.94px;width:28.17px">5.0</div>
<div class="td m" style="left:504.11px;width:28.17px">13</div>
<div class="td m" style="left:532.28px;width:28.17px">0.5</div>
<div class="td pk" style="left:560.45px;width:28.17px"><i class="aL">←</i>8.7</div>
<div class="td" style="left:588.62px;width:28.17px"><i class="aD">↙</i>8.7</div>
<div class="td" style="left:616.79px;width:28.17px"><i class="aU">↖</i>8.2</div>
<div class="td" style="left:644.96px;width:28.17px"><i class="aD">↙</i>10</div>
<div class="td" style="left:673.13px;width:28.17px"><i class="aD">↙</i>8.7</div>
<div class="td" style="left:701.30px;width:28.17px"><i class="aD">↙</i>8.2</div>
<div class="td" style="left:729.47px;width:28.17px"><i class="aU">↖</i>7.7</div>
<div class="td" style="left:757.64px;width:28.17px"><i class="aD">↙</i>8.6</div>
<div class="td" style="left:785.81px;width:28.17px"><i class="aU">↖</i>8.0</div>
<div class="td" style="left:813.98px;width:28.17px"><i class="aD">↙</i>8.3</div>
<div class="td" style="left:842.15px;width:28.17px"><i class="aU">↖</i>7.4</div>
<div class="td" style="left:870.32px;width:28.17px"><i class="aD">↙</i>7.6</div>
<div class="td" style="left:898.49px;width:28.17px"><i class="aU">↖</i>7.5</div>
<div class="td" style="left:926.66px;width:28.17px"><i class="aD">↙</i>8.7</div>
<div class="td" style="left:954.83px;width:28.17px"></div>
<div class="td" style="left:983.00px;width:28.17px"></div>
<div class="td" style="left:1011.17px;width:28.17px"></div>
<div class="td" style="left:1039.34px;width:28.17px"></div>
<div class="td" style="left:1067.51px;width:28.17px"></div>
<div class="td" style="left:1095.68px;width:28.17px"></div>
<div class="td" style="left:1123.85px;width:28.17px"><i class="aU">↖</i>8.0</div>
<div class="td" style="left:1152.02px;width:28.17px"><i class="aU">↖</i>9.3</div>
<div class="td" style="left:1180.19px;width:28.17px"></div>
<div class="td" style="left:1208.36px;width:28.17px"></div>
<div class="td" style="left:1236.53px;width:28.17px"></div>
</div>
<div class="tr" style="top:239.90px;height:21.60px">
<div class="td first" style="left:347.500px;width:42.70px"></div>
<div class="td lk" style="left:390.20px;width:29.40px"><span class="g">G</span><svg viewBox="5 1.5 16.500 20" width="11.300" height="14.200" preserveAspectRatio="none"><path d="M5 1.500L10.500 3.400V14.800L15.200 12.200L12.600 11L10.900 6.600L21.500 10.300V15.600L10.500 21.500L5 18.300Z"/></svg></div>
<div class="td m" style="left:419.60px;width:28.17px">5</div>
<div class="td m" style="left:447.77px;width:28.17px">24</div>
<div class="td m" style="left:475.94px;width:28.17px">21</div>
<div class="td m" style="left:504.11px;width:28.17px">5.9</div>
<div class="td m" style="left:532.28px;width:28.17px">0.0</div>
<div class="td pk" style="left:560.45px;width:28.17px"></div>
<div class="td" style="left:588.62px;width:28.17px"><i class="aL">←</i>5.0</div>
<div class="td" style="left:616.79px;width:28.17px"><i class="aL">←</i>5.0</div>
<div class="td" style="left:644.96px;width:28.17px"><i class="aL">←</i>5.0</div>
<div class="td" style="left:673.13px;width:28.17px"><i class="aU">↖</i>5.0</div>
<div class="td" style="left:701.30px;width:28.17px"></div>
<div class="td" style="left:729.47px;width:28.17px"><i class="aL">←</i>6.0</div>
<div class="td" style="left:757.64px;width:28.17px"><i class="aL">←</i>6.0</div>
<div class="td" style="left:785.81px;width:28.17px"></div>
<div class="td" style="left:813.98px;width:28.17px"><i class="aD">↙</i>6.0</div>
<div class="td" style="left:842.15px;width:28.17px"><i class="aU">↖</i>5.0</div>
<div class="td" style="left:870.32px;width:28.17px"><i class="aU">↖</i>6.0</div>
<div class="td" style="left:898.49px;width:28.17px"><i class="aU">↖</i>6.7</div>
<div class="td" style="left:926.66px;width:28.17px"><i class="aD">↙</i>7.0</div>
<div class="td" style="left:954.83px;width:28.17px"></div>
<div class="td" style="left:983.00px;width:28.17px"></div>
<div class="td" style="left:1011.17px;width:28.17px"></div>
<div class="td" style="left:1039.34px;width:28.17px"></div>
<div class="td" style="left:1067.51px;width:28.17px"></div>
<div class="td" style="left:1095.68px;width:28.17px">5.0</div>
<div class="td" style="left:1123.85px;width:28.17px"></div>
<div class="td" style="left:1152.02px;width:28.17px"></div>
<div class="td" style="left:1180.19px;width:28.17px"></div>
<div class="td" style="left:1208.36px;width:28.17px"></div>
<div class="td" style="left:1236.53px;width:28.17px"></div>
</div>
<div class="tr on" style="top:261.50px;height:21.60px">
<div class="td first" style="left:347.500px;width:42.70px"></div>
<div class="td lk" style="left:390.20px;width:29.40px"><span class="g">G</span><svg viewBox="5 1.5 16.500 20" width="11.300" height="14.200" preserveAspectRatio="none"><path d="M5 1.500L10.500 3.400V14.800L15.200 12.200L12.600 11L10.900 6.600L21.500 10.300V15.600L10.500 21.500L5 18.300Z"/></svg></div>
<div class="td m" style="left:419.60px;width:28.17px">3</div>
<div class="td m" style="left:447.77px;width:28.17px">47</div>
<div class="td m" style="left:475.94px;width:28.17px">6.4</div>
<div class="td m" style="left:504.11px;width:28.17px">10</div>
<div class="td m" style="left:532.28px;width:28.17px">0.5</div>
<div class="td" style="left:560.45px;width:28.17px"><i class="aL">←</i>11</div>
<div class="td" style="left:588.62px;width:28.17px"><i class="aD">↙</i>11</div>
<div class="td" style="left:616.79px;width:28.17px"><i class="aL">←</i>10</div>
<div class="td" style="left:644.96px;width:28.17px"><i class="aL">←</i>10</div>
<div class="td" style="left:673.13px;width:28.17px"><i class="aU">↖</i>10</div>
<div class="td" style="left:701.30px;width:28.17px"><i class="aD">↙</i>11</div>
<div class="td" style="left:729.47px;width:28.17px"><i class="aU">↖</i>10</div>
<div class="td" style="left:757.64px;width:28.17px"><i class="aL">←</i>11</div>
<div class="td" style="left:785.81px;width:28.17px"><i class="aD">↙</i>11</div>
<div class="td" style="left:813.98px;width:28.17px"><i class="aD">↙</i>10</div>
<div class="td" style="left:842.15px;width:28.17px"><i class="aD">↙</i>9.0</div>
<div class="td" style="left:870.32px;width:28.17px"><i class="aU">↖</i>8.7</div>
<div class="td" style="left:898.49px;width:28.17px"><i class="aD">↙</i>9.4</div>
<div class="td" style="left:926.66px;width:28.17px">8.5</div>
<div class="td" style="left:954.83px;width:28.17px"></div>
<div class="td" style="left:983.00px;width:28.17px"></div>
<div class="td" style="left:1011.17px;width:28.17px"></div>
<div class="td" style="left:1039.34px;width:28.17px"></div>
<div class="td" style="left:1067.51px;width:28.17px"></div>
<div class="td" style="left:1095.68px;width:28.17px"></div>
<div class="td" style="left:1123.85px;width:28.17px"></div>
<div class="td" style="left:1152.02px;width:28.17px"></div>
<div class="td" style="left:1180.19px;width:28.17px"></div>
<div class="td" style="left:1208.36px;width:28.17px"></div>
<div class="td" style="left:1236.53px;width:28.17px"></div>
</div>
<div class="tr" style="top:283.10px;height:21.60px">
<div class="td first" style="left:347.500px;width:42.70px"></div>
<div class="td lk" style="left:390.20px;width:29.40px"><span class="g">G</span><svg viewBox="5 1.5 16.500 20" width="11.300" height="14.200" preserveAspectRatio="none"><path d="M5 1.500L10.500 3.400V14.800L15.200 12.200L12.600 11L10.900 6.600L21.500 10.300V15.600L10.500 21.500L5 18.300Z"/></svg></div>
<div class="td m" style="left:419.60px;width:28.17px">3</div>
<div class="td m" style="left:447.77px;width:28.17px">21</div>
<div class="td m" style="left:475.94px;width:28.17px">14</div>
<div class="td m" style="left:504.11px;width:28.17px">2.3</div>
<div class="td m" style="left:532.28px;width:28.17px">0.0</div>
<div class="td pk" style="left:560.45px;width:28.17px"></div>
<div class="td" style="left:588.62px;width:28.17px"><i class="aL">←</i>1.0</div>
<div class="td" style="left:616.79px;width:28.17px"><i class="aU">↖</i>1.0</div>
<div class="td" style="left:644.96px;width:28.17px"><i class="aD">↙</i>2.3</div>
<div class="td" style="left:673.13px;width:28.17px"><i class="aL">←</i>1.0</div>
<div class="td" style="left:701.30px;width:28.17px"><i class="aU">↖</i>1.0</div>
<div class="td" style="left:729.47px;width:28.17px"></div>
<div class="td" style="left:757.64px;width:28.17px"></div>
<div class="td" style="left:785.81px;width:28.17px"></div>
<div class="td" style="left:813.98px;width:28.17px"><i class="aD">↙</i>4.0</div>
<div class="td" style="left:842.15px;width:28.17px"></div>
<div class="td" style="left:870.32px;width:28.17px"><i class="aU">↖</i>1.0</div>
<div class="td" style="left:898.49px;width:28.17px"></div>
<div class="td" style="left:926.66px;width:28.17px"></div>
<div class="td" style="left:954.83px;width:28.17px"></div>
<div class="td" style="left:983.00px;width:28.17px"></div>
<div class="td" style="left:1011.17px;width:28.17px"><i class="aL">←</i>2.0</div>
<div class="td" style="left:1039.34px;width:28.17px"><i class="aU">↖</i>2.0</div>
<div class="td" style="left:1067.51px;width:28.17px"></div>
<div class="td" style="left:1095.68px;width:28.17px"></div>
<div class="td" style="left:1123.85px;width:28.17px"><i class="aU">↖</i>3.0</div>
<div class="td" style="left:1152.02px;width:28.17px"><i class="aL">←</i>4.0</div>
<div class="td" style="left:1180.19px;width:28.17px"><i class="aD">↙</i>4.0</div>
<div class="td" style="left:1208.36px;width:28.17px"></div>
<div class="td" style="left:1236.53px;width:28.17px"><i class="aU">↖</i>3.0</div>
</div>
<div class="tr" style="top:304.70px;height:21.60px">
<div class="td first" style="left:347.500px;width:42.70px"></div>
<div class="td lk" style="left:390.20px;width:29.40px"><span class="g">G</span><svg viewBox="5 1.5 16.500 20" width="11.300" height="14.200" preserveAspectRatio="none"><path d="M5 1.500L10.500 3.400V14.800L15.200 12.200L12.600 11L10.900 6.600L21.500 10.300V15.600L10.500 21.500L5 18.300Z"/></svg></div>
<div class="td m" style="left:419.60px;width:28.17px">2</div>
<div class="td m" style="left:447.77px;width:28.17px">95</div>
<div class="td m" style="left:475.94px;width:28.17px">2.1</div>
<div class="td m" style="left:504.11px;width:28.17px">1.1</div>
<div class="td m" style="left:532.28px;width:28.17px">0.0</div>
<div class="td pk" style="left:560.45px;width:28.17px"><i class="aL">←</i>1.0</div>
<div class="td" style="left:588.62px;width:28.17px"><i class="aL">←</i>1.0</div>
<div class="td" style="left:616.79px;width:28.17px"><i class="aL">←</i>1.0</div>
<div class="td" style="left:644.96px;width:28.17px"><i class="aL">←</i>1.0</div>
<div class="td" style="left:673.13px;width:28.17px"><i class="aL">←</i>1.0</div>
<div class="td" style="left:701.30px;width:28.17px"><i class="aL">←</i>1.0</div>
<div class="td" style="left:729.47px;width:28.17px"><i class="aL">←</i>1.0</div>
<div class="td" style="left:757.64px;width:28.17px"><i class="aL">←</i>1.0</div>
<div class="td" style="left:785.81px;width:28.17px"><i class="aL">←</i>1.0</div>
<div class="td" style="left:813.98px;width:28.17px"><i class="aL">←</i>1.0</div>
<div class="td" style="left:842.15px;width:28.17px"><i class="aL">←</i>1.0</div>
<div class="td" style="left:870.32px;width:28.17px"><i class="aL">←</i>1.0</div>
<div class="td" style="left:898.49px;width:28.17px"><i class="aL">←</i>1.0</div>
<div class="td" style="left:926.66px;width:28.17px"><i class="aL">←</i>1.0</div>
<div class="td" style="left:954.83px;width:28.17px"><i class="aL">←</i>1.0</div>
<div class="td" style="left:983.00px;width:28.17px"><i class="aL">←</i>1.0</div>
<div class="td" style="left:1011.17px;width:28.17px"><i class="aU">↖</i>1.0</div>
<div class="td" style="left:1039.34px;width:28.17px"></div>
<div class="td" style="left:1067.51px;width:28.17px"></div>
<div class="td" style="left:1095.68px;width:28.17px"></div>
<div class="td" style="left:1123.85px;width:28.17px"></div>
<div class="td" style="left:1152.02px;width:28.17px"></div>
<div class="td" style="left:1180.19px;width:28.17px">11</div>
<div class="td" style="left:1208.36px;width:28.17px"></div>
<div class="td" style="left:1236.53px;width:28.17px"></div>
</div>
<div class="tr" style="top:326.30px;height:21.60px">
<div class="td first" style="left:347.500px;width:42.70px"></div>
<div class="td lk" style="left:390.20px;width:29.40px"><span class="g">G</span><svg viewBox="5 1.5 16.500 20" width="11.300" height="14.200" preserveAspectRatio="none"><path d="M5 1.500L10.500 3.400V14.800L15.200 12.200L12.600 11L10.900 6.600L21.500 10.300V15.600L10.500 21.500L5 18.300Z"/></svg></div>
<div class="td m" style="left:419.60px;width:28.17px">2</div>
<div class="td m" style="left:447.77px;width:28.17px">30</div>
<div class="td m" style="left:475.94px;width:28.17px">6.7</div>
<div class="td m" style="left:504.11px;width:28.17px">4.5</div>
<div class="td m" style="left:532.28px;width:28.17px"></div>
<div class="td pk" style="left:560.45px;width:28.17px"></div>
<div class="td" style="left:588.62px;width:28.17px"></div>
<div class="td" style="left:616.79px;width:28.17px"></div>
<div class="td" style="left:644.96px;width:28.17px"></div>
<div class="td" style="left:673.13px;width:28.17px"><i class="aL">←</i>5.0</div>
<div class="td" style="left:701.30px;width:28.17px"><i class="aD">↙</i>5.0</div>
<div class="td" style="left:729.47px;width:28.17px"></div>
<div class="td" style="left:757.64px;width:28.17px"></div>
<div class="td" style="left:785.81px;width:28.17px"><i class="aD">↙</i>4.7</div>
<div class="td" style="left:813.98px;width:28.17px"><i class="aU">↖</i>4.0</div>
<div class="td" style="left:842.15px;width:28.17px"><i class="aD">↙</i>5.3</div>
<div class="td" style="left:870.32px;width:28.17px"><i class="aU">↖</i>5.0</div>
<div class="td" style="left:898.49px;width:28.17px"><i class="aD">↙</i>6.0</div>
<div class="td" style="left:926.66px;width:28.17px"><i class="aD">↙</i>5.0</div>
<div class="td" style="left:954.83px;width:28.17px"><i class="aU">↖</i>4.0</div>
<div class="td" style="left:983.00px;width:28.17px"></div>
<div class="td" style="left:1011.17px;width:28.17px"></div>
<div class="td" style="left:1039.34px;width:28.17px"><i class="aD">↙</i>5.0</div>
<div class="td" style="left:1067.51px;width:28.17px"></div>
<div class="td" style="left:1095.68px;width:28.17px"><i class="aD">↙</i>4.0</div>
<div class="td" style="left:1123.85px;width:28.17px"></div>
<div class="td" style="left:1152.02px;width:28.17px"></div>
<div class="td" style="left:1180.19px;width:28.17px"><i class="aU">↖</i>3.0</div>
<div class="td" style="left:1208.36px;width:28.17px">4.0</div>
<div class="td" style="left:1236.53px;width:28.17px"></div>
</div>
<div class="tr" style="top:347.90px;height:21.60px">
<div class="td first" style="left:347.500px;width:42.70px"></div>
<div class="td lk" style="left:390.20px;width:29.40px"><span class="g">G</span><svg viewBox="5 1.5 16.500 20" width="11.300" height="14.200" preserveAspectRatio="none"><path d="M5 1.500L10.500 3.400V14.800L15.200 12.200L12.600 11L10.900 6.600L21.500 10.300V15.600L10.500 21.500L5 18.300Z"/></svg></div>
<div class="td m" style="left:419.60px;width:28.17px">2</div>
<div class="td m" style="left:447.77px;width:28.17px">17</div>
<div class="td m" style="left:475.94px;width:28.17px">12</div>
<div class="td m" style="left:504.11px;width:28.17px">7.5</div>
<div class="td m" style="left:532.28px;width:28.17px"></div>
<div class="td pk" style="left:560.45px;width:28.17px"><i class="aL">←</i>9.0</div>
<div class="td" style="left:588.62px;width:28.17px"><i class="aD">↙</i>9.0</div>
<div class="td" style="left:616.79px;width:28.17px"></div>
<div class="td" style="left:644.96px;width:28.17px"></div>
<div class="td" style="left:673.13px;width:28.17px"></div>
<div class="td" style="left:701.30px;width:28.17px"><i class="aL">←</i>7.0</div>
<div class="td" style="left:729.47px;width:28.17px"><i class="aU">↖</i>7.0</div>
<div class="td" style="left:757.64px;width:28.17px"><i class="aD">↙</i>8.0</div>
<div class="td" style="left:785.81px;width:28.17px"><i class="aU">↖</i>6.5</div>
<div class="td" style="left:813.98px;width:28.17px"><i class="aD">↙</i>8.0</div>
<div class="td" style="left:842.15px;width:28.17px"><i class="aD">↙</i>9.0</div>
<div class="td" style="left:870.32px;width:28.17px"><i class="aD">↙</i>7.0</div>
<div class="td" style="left:898.49px;width:28.17px"><i class="aU">↖</i>5.5</div>
<div class="td" style="left:926.66px;width:28.17px"><i class="aU">↖</i>7.0</div>
<div class="td" style="left:954.83px;width:28.17px"></div>
<div class="td" style="left:983.00px;width:28.17px"></div>
<div class="td" style="left:1011.17px;width:28.17px"></div>
<div class="td" style="left:1039.34px;width:28.17px"></div>
<div class="td" style="left:1067.51px;width:28.17px"><i class="aU">↖</i>8.0</div>
<div class="td" style="left:1095.68px;width:28.17px"></div>
<div class="td" style="left:1123.85px;width:28.17px">9.0</div>
<div class="td" style="left:1152.02px;width:28.17px"></div>
<div class="td" style="left:1180.19px;width:28.17px"></div>
<div class="td" style="left:1208.36px;width:28.17px"></div>
<div class="td" style="left:1236.53px;width:28.17px"></div>
</div>
</div>
<div class="abs" id="search" style="left:185.300px;top:119.200px;width:167.500px;height:28.800px;border:1px solid #989898;border-radius:4px;background:#fff;font-size:13.900px;line-height:28px;padding-left:4.800px;color:#5c5c5c;-webkit-text-stroke:0.200px #5c5c5c;white-space:nowrap">クエリやURLで検索</div>
<div class="abs" style="left:180.4px;top:369.700px;width:1064.6px;height:14.300px;background:#fafafa;border-bottom:1px solid #e0e0e0"></div>
<div class="abs" style="left:184.500px;top:372.600px;width:877.500px;height:8px;border-radius:4px;background:#c1c1c1"></div>
<div class="sel" id="sel-len" style="left:183.300px;top:384.700px;width:55.600px;height:37.600px;line-height:37px;padding-left:4.500px;border-color:#aaa;font-size:14.500px;color:#333">10<svg class="abs" viewBox="0 0 20 20" width="18" height="18" style="left:32.500px;top:10.500px"><path d="M4.500 6.800l5.500 5.700 5.500-5.700" fill="none" stroke="#333" stroke-width="1.800"/></svg></div>
<div class="abs" id="perpage" style="left:244px;top:393.500px;line-height:20px;font-size:13.300px;color:#333;-webkit-text-stroke:0.200px #333">/ ページ</div>
<div class="abs pg" style="left:991.6px;top:393.7px;width:30px;color:#777;font-size:12.500px">«</div>
<div class="abs pg" style="left:1028.2px;top:393.7px;width:30px;color:#777;font-size:12.500px">‹</div>
<div class="abs" style="left:1062.4px;top:388.6px;width:33.800px;height:30.200px;border:1px solid #bbb;border-radius:3px;background:linear-gradient(#fafafa,#ececec)"></div>
<div class="abs pg" style="left:1064.3px;top:393.7px;width:30px;color:#333;font-size:15px">1</div>
<div class="abs pg" style="left:1101.6px;top:393.7px;width:30px;color:#333;font-size:15px">2</div>
<div class="abs pg" style="left:1137.3px;top:393.7px;width:30px;color:#777;font-size:12.500px">…</div>
<div class="abs pg" style="left:1174.4px;top:393.7px;width:30px;color:#777;font-size:12.500px">›</div>
<div class="abs pg" style="left:1211.2px;top:393.7px;width:30px;color:#777;font-size:12.500px">»</div>
<div class="abs" id="note" style="-webkit-text-stroke:0.200px #3c434a;left:181px;top:435.500px;line-height:20px;font-size:13px;color:#3c434a;white-space:nowrap">※Ctrl＋クリックで複数行を同時に選択、Shift＋クリックで複数列を同時に並べ替えできます。""で完全一致検索、!で除外検索ができます。</div>
<div class="hr" style="top:468.500px"></div>
<div class="abs" id="chart" style="left:181.4px;top:477.0px;width:1063.6px;height:244.0px;background:#fff"></div>
<svg class="abs" id="csvg" width="1280" height="721" viewBox="0 0 1280 721" style="left:0;top:0">
<line x1="226.500" x2="1235.500" y1="529.8" y2="529.8" stroke="#e6e6e6" stroke-width="1"/>
<line x1="226.500" x2="1235.500" y1="553.0" y2="553.0" stroke="#e6e6e6" stroke-width="1"/>
<line x1="226.500" x2="1235.500" y1="576.3" y2="576.3" stroke="#e6e6e6" stroke-width="1"/>
<line x1="226.500" x2="1235.500" y1="599.5" y2="599.5" stroke="#e6e6e6" stroke-width="1"/>
<line x1="226.500" x2="1235.500" y1="622.7" y2="622.7" stroke="#e6e6e6" stroke-width="1"/>
<line x1="226.500" x2="1235.500" y1="645.9" y2="645.9" stroke="#e6e6e6" stroke-width="1"/>
<line x1="226.500" x2="1235.500" y1="669.1" y2="669.1" stroke="#e6e6e6" stroke-width="1"/>
<line x1="226.500" x2="1235.500" y1="692.4" y2="692.4" stroke="#e6e6e6" stroke-width="1"/>
<line x1="226.500" x2="1235.500" y1="715.6" y2="715.6" stroke="#e6e6e6" stroke-width="1"/>
<text x="217.300" y="510.5" text-anchor="end" font-size="11" fill="#2a2a2a" stroke="#2a2a2a" stroke-width="0.250">0</text>
<text x="217.300" y="533.7" text-anchor="end" font-size="11" fill="#2a2a2a" stroke="#2a2a2a" stroke-width="0.250">10</text>
<text x="217.300" y="556.9" text-anchor="end" font-size="11" fill="#2a2a2a" stroke="#2a2a2a" stroke-width="0.250">20</text>
<text x="217.300" y="580.2" text-anchor="end" font-size="11" fill="#2a2a2a" stroke="#2a2a2a" stroke-width="0.250">30</text>
<text x="217.300" y="603.4" text-anchor="end" font-size="11" fill="#2a2a2a" stroke="#2a2a2a" stroke-width="0.250">40</text>
<text x="217.300" y="626.6" text-anchor="end" font-size="11" fill="#2a2a2a" stroke="#2a2a2a" stroke-width="0.250">50</text>
<text x="217.300" y="649.8" text-anchor="end" font-size="11" fill="#2a2a2a" stroke="#2a2a2a" stroke-width="0.250">60</text>
<text x="217.300" y="673.0" text-anchor="end" font-size="11" fill="#2a2a2a" stroke="#2a2a2a" stroke-width="0.250">70</text>
<text x="217.300" y="696.3" text-anchor="end" font-size="11" fill="#2a2a2a" stroke="#2a2a2a" stroke-width="0.250">80</text>
<text x="217.300" y="719.5" text-anchor="end" font-size="11" fill="#2a2a2a" stroke="#2a2a2a" stroke-width="0.250">90</text>
<polyline points="227.3,508.9 259.8,508.9 292.3,508.9 324.8,508.9 357.3,508.9 389.8,508.9 422.3,508.9 454.8,508.9 487.3,509.2 519.8,508.9 552.3,508.9 584.8,508.9 617.3,508.9 649.8,508.9 682.3,508.9 714.8,508.9 747.3,508.9 779.8,508.9 812.3,508.9 844.8,509.2 877.3,508.9 909.8,508.9 942.3,508.9 974.8,508.9 1007.3,509.4 1039.8,509.2 1072.3,508.9 1104.8,509.6 1137.3,509.2 1169.8,508.9 1202.3,508.9 1234.8,508.9" fill="none" stroke="#4485e3" stroke-width="4.400" stroke-linejoin="round" stroke-linecap="butt"/>
<rect x="219.9" y="498.9" width="14.8" height="15.600" rx="2" fill="#4485e3" stroke="#fff" stroke-width="1.200"/>
<text x="227.3" y="511.0" text-anchor="middle" font-size="12.300" font-weight="bold" fill="#fff">1</text>
<rect x="252.4" y="498.9" width="14.8" height="15.600" rx="2" fill="#4485e3" stroke="#fff" stroke-width="1.200"/>
<text x="259.8" y="511.0" text-anchor="middle" font-size="12.300" font-weight="bold" fill="#fff">1</text>
<rect x="284.9" y="498.9" width="14.8" height="15.600" rx="2" fill="#4485e3" stroke="#fff" stroke-width="1.200"/>
<text x="292.3" y="511.0" text-anchor="middle" font-size="12.300" font-weight="bold" fill="#fff">1</text>
<rect x="317.4" y="498.9" width="14.8" height="15.600" rx="2" fill="#4485e3" stroke="#fff" stroke-width="1.200"/>
<text x="324.8" y="511.0" text-anchor="middle" font-size="12.300" font-weight="bold" fill="#fff">1</text>
<rect x="349.9" y="498.9" width="14.8" height="15.600" rx="2" fill="#4485e3" stroke="#fff" stroke-width="1.200"/>
<text x="357.3" y="511.0" text-anchor="middle" font-size="12.300" font-weight="bold" fill="#fff">1</text>
<rect x="382.4" y="498.9" width="14.8" height="15.600" rx="2" fill="#4485e3" stroke="#fff" stroke-width="1.200"/>
<text x="389.8" y="511.0" text-anchor="middle" font-size="12.300" font-weight="bold" fill="#fff">1</text>
<rect x="414.9" y="498.9" width="14.8" height="15.600" rx="2" fill="#4485e3" stroke="#fff" stroke-width="1.200"/>
<text x="422.3" y="511.0" text-anchor="middle" font-size="12.300" font-weight="bold" fill="#fff">1</text>
<rect x="447.4" y="498.9" width="14.8" height="15.600" rx="2" fill="#4485e3" stroke="#fff" stroke-width="1.200"/>
<text x="454.8" y="511.0" text-anchor="middle" font-size="12.300" font-weight="bold" fill="#fff">1</text>
<rect x="475.4" y="499.2" width="23.9" height="15.600" rx="2" fill="#4485e3" stroke="#fff" stroke-width="1.200"/>
<text x="487.3" y="511.3" text-anchor="middle" font-size="12.300" font-weight="bold" fill="#fff">1.1</text>
<rect x="512.4" y="498.9" width="14.8" height="15.600" rx="2" fill="#4485e3" stroke="#fff" stroke-width="1.200"/>
<text x="519.8" y="511.0" text-anchor="middle" font-size="12.300" font-weight="bold" fill="#fff">1</text>
<rect x="544.9" y="498.9" width="14.8" height="15.600" rx="2" fill="#4485e3" stroke="#fff" stroke-width="1.200"/>
<text x="552.3" y="511.0" text-anchor="middle" font-size="12.300" font-weight="bold" fill="#fff">1</text>
<rect x="577.4" y="498.9" width="14.8" height="15.600" rx="2" fill="#4485e3" stroke="#fff" stroke-width="1.200"/>
<text x="584.8" y="511.0" text-anchor="middle" font-size="12.300" font-weight="bold" fill="#fff">1</text>
<rect x="609.9" y="498.9" width="14.8" height="15.600" rx="2" fill="#4485e3" stroke="#fff" stroke-width="1.200"/>
<text x="617.3" y="511.0" text-anchor="middle" font-size="12.300" font-weight="bold" fill="#fff">1</text>
<rect x="642.4" y="498.9" width="14.8" height="15.600" rx="2" fill="#4485e3" stroke="#fff" stroke-width="1.200"/>
<text x="649.8" y="511.0" text-anchor="middle" font-size="12.300" font-weight="bold" fill="#fff">1</text>
<rect x="674.9" y="498.9" width="14.8" height="15.600" rx="2" fill="#4485e3" stroke="#fff" stroke-width="1.200"/>
<text x="682.3" y="511.0" text-anchor="middle" font-size="12.300" font-weight="bold" fill="#fff">1</text>
<rect x="707.4" y="498.9" width="14.8" height="15.600" rx="2" fill="#4485e3" stroke="#fff" stroke-width="1.200"/>
<text x="714.8" y="511.0" text-anchor="middle" font-size="12.300" font-weight="bold" fill="#fff">1</text>
<rect x="739.9" y="498.9" width="14.8" height="15.600" rx="2" fill="#4485e3" stroke="#fff" stroke-width="1.200"/>
<text x="747.3" y="511.0" text-anchor="middle" font-size="12.300" font-weight="bold" fill="#fff">1</text>
<rect x="772.4" y="498.9" width="14.8" height="15.600" rx="2" fill="#4485e3" stroke="#fff" stroke-width="1.200"/>
<text x="779.8" y="511.0" text-anchor="middle" font-size="12.300" font-weight="bold" fill="#fff">1</text>
<rect x="804.9" y="498.9" width="14.8" height="15.600" rx="2" fill="#4485e3" stroke="#fff" stroke-width="1.200"/>
<text x="812.3" y="511.0" text-anchor="middle" font-size="12.300" font-weight="bold" fill="#fff">1</text>
<rect x="832.8" y="499.2" width="23.9" height="15.600" rx="2" fill="#4485e3" stroke="#fff" stroke-width="1.200"/>
<text x="844.8" y="511.3" text-anchor="middle" font-size="12.300" font-weight="bold" fill="#fff">1.1</text>
<rect x="869.9" y="498.9" width="14.8" height="15.600" rx="2" fill="#4485e3" stroke="#fff" stroke-width="1.200"/>
<text x="877.3" y="511.0" text-anchor="middle" font-size="12.300" font-weight="bold" fill="#fff">1</text>
<rect x="902.4" y="498.9" width="14.8" height="15.600" rx="2" fill="#4485e3" stroke="#fff" stroke-width="1.200"/>
<text x="909.8" y="511.0" text-anchor="middle" font-size="12.300" font-weight="bold" fill="#fff">1</text>
<rect x="934.9" y="498.9" width="14.8" height="15.600" rx="2" fill="#4485e3" stroke="#fff" stroke-width="1.200"/>
<text x="942.3" y="511.0" text-anchor="middle" font-size="12.300" font-weight="bold" fill="#fff">1</text>
<rect x="967.4" y="498.9" width="14.8" height="15.600" rx="2" fill="#4485e3" stroke="#fff" stroke-width="1.200"/>
<text x="974.8" y="511.0" text-anchor="middle" font-size="12.300" font-weight="bold" fill="#fff">1</text>
<rect x="995.3" y="499.4" width="23.9" height="15.600" rx="2" fill="#4485e3" stroke="#fff" stroke-width="1.200"/>
<text x="1007.3" y="511.5" text-anchor="middle" font-size="12.300" font-weight="bold" fill="#fff">1.2</text>
<rect x="1027.8" y="499.2" width="23.9" height="15.600" rx="2" fill="#4485e3" stroke="#fff" stroke-width="1.200"/>
<text x="1039.8" y="511.3" text-anchor="middle" font-size="12.300" font-weight="bold" fill="#fff">1.1</text>
<rect x="1064.9" y="498.9" width="14.8" height="15.600" rx="2" fill="#4485e3" stroke="#fff" stroke-width="1.200"/>
<text x="1072.3" y="511.0" text-anchor="middle" font-size="12.300" font-weight="bold" fill="#fff">1</text>
<rect x="1092.8" y="499.6" width="23.9" height="15.600" rx="2" fill="#4485e3" stroke="#fff" stroke-width="1.200"/>
<text x="1104.8" y="511.7" text-anchor="middle" font-size="12.300" font-weight="bold" fill="#fff">1.3</text>
<rect x="1125.3" y="499.2" width="23.9" height="15.600" rx="2" fill="#4485e3" stroke="#fff" stroke-width="1.200"/>
<text x="1137.3" y="511.3" text-anchor="middle" font-size="12.300" font-weight="bold" fill="#fff">1.1</text>
<rect x="1162.4" y="498.9" width="14.8" height="15.600" rx="2" fill="#4485e3" stroke="#fff" stroke-width="1.200"/>
<text x="1169.8" y="511.0" text-anchor="middle" font-size="12.300" font-weight="bold" fill="#fff">1</text>
<rect x="1194.9" y="498.9" width="14.8" height="15.600" rx="2" fill="#4485e3" stroke="#fff" stroke-width="1.200"/>
<text x="1202.3" y="511.0" text-anchor="middle" font-size="12.300" font-weight="bold" fill="#fff">1</text>
<rect x="1227.4" y="498.9" width="14.8" height="15.600" rx="2" fill="#4485e3" stroke="#fff" stroke-width="1.200"/>
<text x="1234.8" y="511.0" text-anchor="middle" font-size="12.300" font-weight="bold" fill="#fff">1</text>
<polyline points="227.3,532.1 259.8,532.1 292.3,529.8 324.8,529.8 357.3,529.8 389.8,532.1 422.3,529.8 454.8,532.1 487.3,532.1 519.8,529.8 552.3,527.5 584.8,526.8 617.3,528.4 649.8,526.3" fill="none" stroke="#66d095" stroke-width="4.400" stroke-linejoin="round" stroke-linecap="butt"/>
<rect x="217.2" y="522.1" width="20.1" height="15.600" rx="2" fill="#66d095" stroke="#fff" stroke-width="1.200"/>
<text x="227.3" y="534.2" text-anchor="middle" font-size="12.300" font-weight="bold" fill="#fff">11</text>
<rect x="249.8" y="522.1" width="20.1" height="15.600" rx="2" fill="#66d095" stroke="#fff" stroke-width="1.200"/>
<text x="259.8" y="534.2" text-anchor="middle" font-size="12.300" font-weight="bold" fill="#fff">11</text>
<rect x="282.2" y="519.8" width="20.1" height="15.600" rx="2" fill="#66d095" stroke="#fff" stroke-width="1.200"/>
<text x="292.3" y="531.9" text-anchor="middle" font-size="12.300" font-weight="bold" fill="#fff">10</text>
<rect x="314.8" y="519.8" width="20.1" height="15.600" rx="2" fill="#66d095" stroke="#fff" stroke-width="1.200"/>
<text x="324.8" y="531.9" text-anchor="middle" font-size="12.300" font-weight="bold" fill="#fff">10</text>
<rect x="347.2" y="519.8" width="20.1" height="15.600" rx="2" fill="#66d095" stroke="#fff" stroke-width="1.200"/>
<text x="357.3" y="531.9" text-anchor="middle" font-size="12.300" font-weight="bold" fill="#fff">10</text>
<rect x="379.8" y="522.1" width="20.1" height="15.600" rx="2" fill="#66d095" stroke="#fff" stroke-width="1.200"/>
<text x="389.8" y="534.2" text-anchor="middle" font-size="12.300" font-weight="bold" fill="#fff">11</text>
<rect x="412.2" y="519.8" width="20.1" height="15.600" rx="2" fill="#66d095" stroke="#fff" stroke-width="1.200"/>
<text x="422.3" y="531.9" text-anchor="middle" font-size="12.300" font-weight="bold" fill="#fff">10</text>
<rect x="444.8" y="522.1" width="20.1" height="15.600" rx="2" fill="#66d095" stroke="#fff" stroke-width="1.200"/>
<text x="454.8" y="534.2" text-anchor="middle" font-size="12.300" font-weight="bold" fill="#fff">11</text>
<rect x="477.2" y="522.1" width="20.1" height="15.600" rx="2" fill="#66d095" stroke="#fff" stroke-width="1.200"/>
<text x="487.3" y="534.2" text-anchor="middle" font-size="12.300" font-weight="bold" fill="#fff">11</text>
<rect x="509.7" y="519.8" width="20.1" height="15.600" rx="2" fill="#66d095" stroke="#fff" stroke-width="1.200"/>
<text x="519.8" y="531.9" text-anchor="middle" font-size="12.300" font-weight="bold" fill="#fff">10</text>
<rect x="544.9" y="517.5" width="14.8" height="15.600" rx="2" fill="#66d095" stroke="#fff" stroke-width="1.200"/>
<text x="552.3" y="529.6" text-anchor="middle" font-size="12.300" font-weight="bold" fill="#fff">9</text>
<rect x="572.8" y="516.8" width="23.9" height="15.600" rx="2" fill="#66d095" stroke="#fff" stroke-width="1.200"/>
<text x="584.8" y="528.9" text-anchor="middle" font-size="12.300" font-weight="bold" fill="#fff">8.7</text>
<rect x="605.3" y="518.4" width="23.9" height="15.600" rx="2" fill="#66d095" stroke="#fff" stroke-width="1.200"/>
<text x="617.3" y="530.5" text-anchor="middle" font-size="12.300" font-weight="bold" fill="#fff">9.4</text>
<rect x="637.8" y="516.3" width="23.9" height="15.600" rx="2" fill="#66d095" stroke="#fff" stroke-width="1.200"/>
<text x="649.8" y="528.4" text-anchor="middle" font-size="12.300" font-weight="bold" fill="#fff">8.5</text>
<circle cx="1119.2" cy="488" r="6.300" fill="none" stroke="#6e8192" stroke-width="1.300"/><path d="M1115.9 488H1122.5" stroke="#6e8192" stroke-width="1.300"/><path d="M1119.2 484.7V491.3" stroke="#6e8192" stroke-width="1.300"/>
<circle cx="1139.5" cy="488" r="6.300" fill="none" stroke="#6e8192" stroke-width="1.300"/><path d="M1136.2 488H1142.8" stroke="#6e8192" stroke-width="1.300"/>
<circle cx="1160.6000000000001" cy="486.2" r="4.600" fill="none" stroke="#6e8192" stroke-width="1.700"/><path d="M1164.0 489.6L1169.2 494.8" stroke="#6e8192" stroke-width="2.400"/><path d="M1158.6000000000001 486.2H1162.6000000000001M1160.6000000000001 484.2V488.2" stroke="#6e8192" stroke-width="1"/>
<g transform="translate(1175.7,479.5) scale(0.700)" fill="none" stroke="#3b82f6" stroke-width="1.800" stroke-linejoin="round"><path d="M8 11V4.500a1.500 1.500 0 013 0V10M11 10V3a1.500 1.500 0 013 0V10M14 10V4a1.500 1.500 0 013 0V11M17 11V6.500a1.500 1.500 0 013 0V15c0 4-2.500 7-6.500 7S8 20 6.500 17.500L3.500 13c-.8-1.300.7-2.600 2-1.500L8 14"/></g>
<path d="M1207.6 480.5L1216.1 488.2H1213.6V495H1209.3999999999999V490.2H1205.8V495H1201.6V488.2H1199.1z" fill="#5a6b7b"/>
<path d="M1219.8 483.4H1234.8M1219.8 488H1234.8M1219.8 492.6H1234.8" stroke="#5a6b7b" stroke-width="1.600"/>
</svg>
<div class="abs" id="wm" style="left:892px;top:687.500px;font-family:'DejaVu Sans',sans-serif;font-weight:200;font-size:27px;line-height:36px;letter-spacing:1.780px;-webkit-text-stroke:0.450px #000;color:#000;white-space:nowrap;transform:scaleX(1.25);transform-origin:0 0">ai-direct-editor.com</div>
</div>
</body></html>
